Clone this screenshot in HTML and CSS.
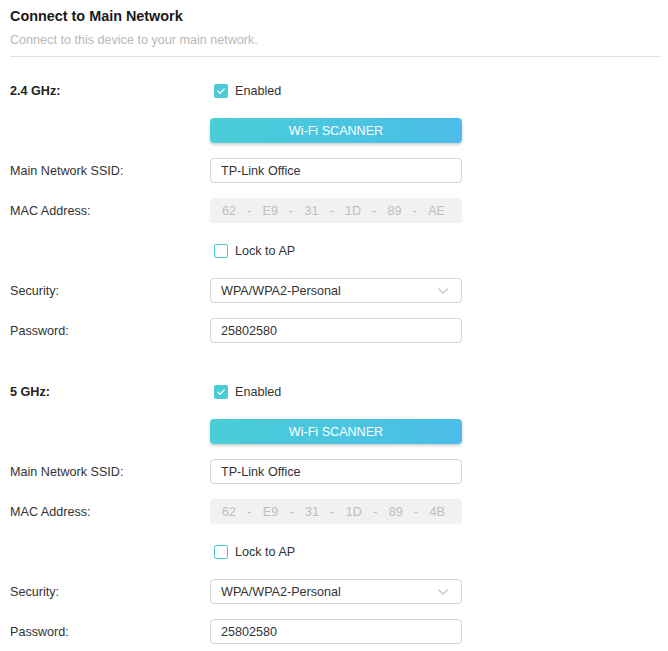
FILE: index.html
```html
<!DOCTYPE html>
<html>
<head>
<meta charset="utf-8">
<link rel="stylesheet" href="styles.css">
</head>
<body>
<div class="page">
  <div class="head">
    <div class="title">Connect to Main Network</div>
    <div class="subtitle">Connect to this device to your main network.</div>
  </div>

  <div class="section">
    <div class="row"><div class="label strong">2.4 GHz:</div><div class="ctrl"><span class="cb on"><svg viewBox="0 0 14 14" width="14" height="14"><path d="M3.8 7.2 L6 9.3 L10.3 4.9" fill="none" stroke="#fff" stroke-width="1.3" stroke-linecap="round" stroke-linejoin="round"/></svg></span><span class="cbtext">Enabled</span></div></div>
    <div class="row"><div class="label"></div><div class="ctrl"><div class="btn">Wi-Fi SCANNER</div></div></div>
    <div class="row"><div class="label">Main Network SSID:</div><div class="ctrl"><div class="input">TP-Link Office</div></div></div>
    <div class="row"><div class="label">MAC Address:</div><div class="ctrl"><div class="mac"><span>62</span><span>-</span><span>E9</span><span>-</span><span>31</span><span>-</span><span>1D</span><span>-</span><span>89</span><span>-</span><span>AE</span></div></div></div>
    <div class="row"><div class="label"></div><div class="ctrl"><span class="cb"></span><span class="cbtext">Lock to AP</span></div></div>
    <div class="row"><div class="label">Security:</div><div class="ctrl"><div class="input select">WPA/WPA2-Personal<svg class="chev" viewBox="0 0 12 8" width="12" height="8"><path d="M1.5 1.8 L6 6 L10.5 1.8" fill="none" stroke="#c4c4c4" stroke-width="1.2" stroke-linecap="round" stroke-linejoin="round"/></svg></div></div></div>
    <div class="row"><div class="label">Password:</div><div class="ctrl"><div class="input">25802580</div></div></div>
  </div>

  <div class="section second">
    <div class="row"><div class="label strong">5 GHz:</div><div class="ctrl"><span class="cb on"><svg viewBox="0 0 14 14" width="14" height="14"><path d="M3.8 7.2 L6 9.3 L10.3 4.9" fill="none" stroke="#fff" stroke-width="1.3" stroke-linecap="round" stroke-linejoin="round"/></svg></span><span class="cbtext">Enabled</span></div></div>
    <div class="row"><div class="label"></div><div class="ctrl"><div class="btn">Wi-Fi SCANNER</div></div></div>
    <div class="row"><div class="label">Main Network SSID:</div><div class="ctrl"><div class="input">TP-Link Office</div></div></div>
    <div class="row"><div class="label">MAC Address:</div><div class="ctrl"><div class="mac"><span>62</span><span>-</span><span>E9</span><span>-</span><span>31</span><span>-</span><span>1D</span><span>-</span><span>89</span><span>-</span><span>4B</span></div></div></div>
    <div class="row"><div class="label"></div><div class="ctrl"><span class="cb"></span><span class="cbtext">Lock to AP</span></div></div>
    <div class="row"><div class="label">Security:</div><div class="ctrl"><div class="input select">WPA/WPA2-Personal<svg class="chev" viewBox="0 0 12 8" width="12" height="8"><path d="M1.5 1.8 L6 6 L10.5 1.8" fill="none" stroke="#c4c4c4" stroke-width="1.2" stroke-linecap="round" stroke-linejoin="round"/></svg></div></div></div>
    <div class="row"><div class="label">Password:</div><div class="ctrl"><div class="input">25802580</div></div></div>
  </div>
</div>
</body>
</html>
```
FILE: styles.css
```css
html, body {
  margin: 0;
  padding: 0;
  background: #fff;
}
body {
  font-family: "Liberation Sans", Arial, sans-serif;
  font-size: 12.6px;
  color: #333;
}
.page {
  padding: 0 7px 0 10px;
}
.head {
  padding-top: 7px;
  height: 49px;
  border-bottom: 1px solid #e3e3e3;
}
.title {
  font-size: 14.4px;
  font-weight: bold;
  color: #1a1a1a;
  line-height: 18px;
}
.subtitle {
  margin-top: 7px;
  color: #b8b8b8;
  line-height: 16px;
}
.section {
  padding-top: 21px;
}
.section.second {
  padding-top: 21px;
}
.row {
  display: flex;
  align-items: center;
  height: 25px;
  margin-bottom: 15px;
}
.label {
  width: 200px;
  flex: none;
  color: #333;
}
.label.strong {
  font-weight: bold;
  color: #222;
}
.ctrl {
  width: 252px;
  display: flex;
  align-items: center;
}
.cb {
  width: 14px;
  height: 14px;
  box-sizing: border-box;
  border: 1px solid #4acbd6;
  border-radius: 2px;
  margin-left: 4px;
  display: flex;
  background: #fff;
}
.cb.on {
  background: #4acbd6;
  border: none;
}
.cbtext {
  margin-left: 7px;
  color: #333;
}
.btn {
  width: 100%;
  height: 25px;
  border-radius: 4px;
  background: linear-gradient(to right, #4acdd6, #4bbde9);
  box-shadow: 0 2px 3px rgba(0, 0, 0, 0.18);
  color: #fff;
  display: flex;
  align-items: center;
  justify-content: center;
}
.input {
  width: 100%;
  height: 25px;
  box-sizing: border-box;
  border: 1px solid #d6d6d6;
  border-radius: 4px;
  padding-left: 10px;
  display: flex;
  align-items: center;
  color: #333;
}
.select {
  justify-content: space-between;
  padding-right: 12px;
}
.chev {
  display: block;
}
.mac {
  width: 100%;
  height: 25px;
  box-sizing: border-box;
  border-radius: 4px;
  background: #f1f1f1;
  color: #bdbdbd;
  display: flex;
  align-items: center;
  justify-content: space-between;
  padding: 0 17px 0 12px;
}
```
